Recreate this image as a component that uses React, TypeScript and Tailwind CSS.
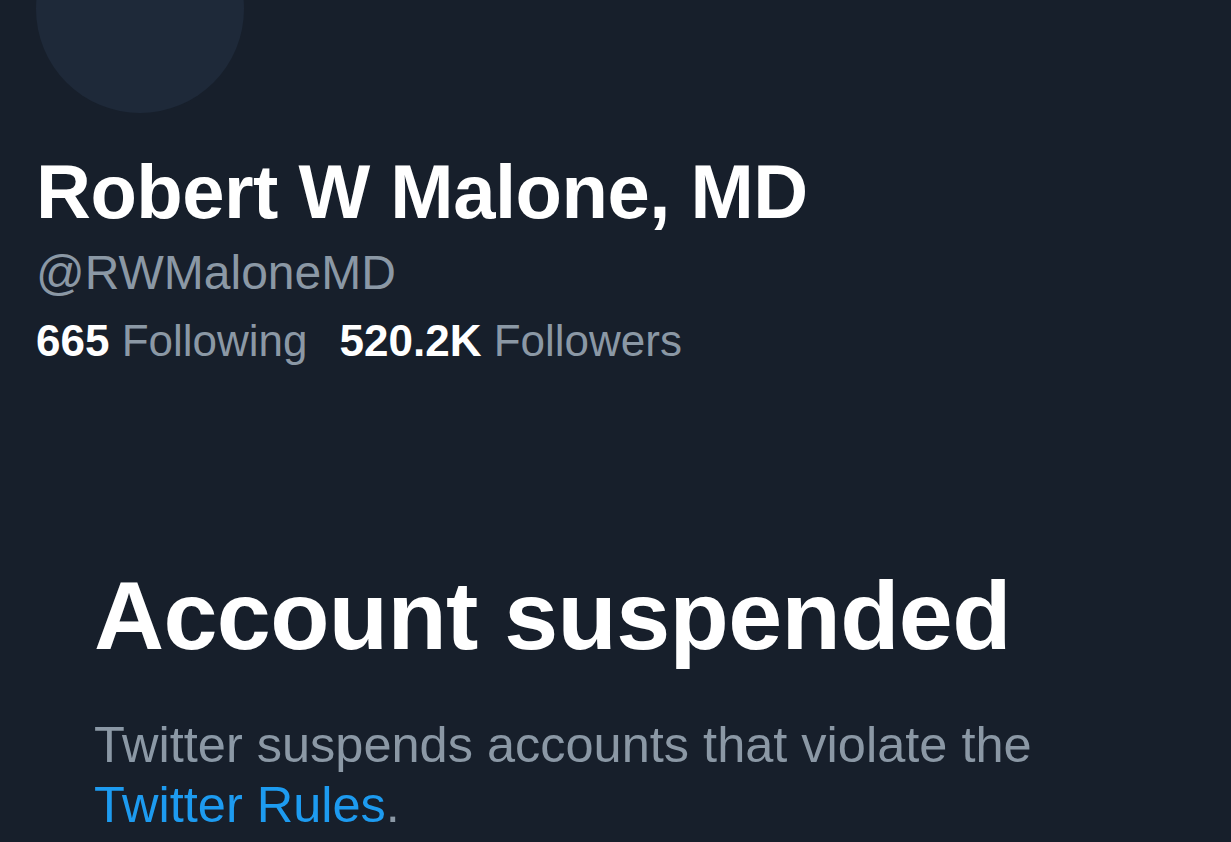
export default function App() {
  return (
    <div
      className="h-[842px] w-[1231px] overflow-hidden bg-[#171f2b] text-white"
      style={{ fontFamily: '"Liberation Sans", Arial, sans-serif' }}
    >
      <div className="pl-[36px]">
        <div className="mt-[-95px] h-[208px] w-[208px] rounded-full bg-[#1e2939]" />

        <h1 className="mt-[37px] text-[76px] font-bold leading-[84px] tracking-[-0.5px]">
          Robert W Malone, MD
        </h1>
        <div className="mt-[9px] text-[48px] leading-[60px] text-[#8b98a5]">@RWMaloneMD</div>
        <div className="mt-[12px] flex gap-[32px] text-[44px] leading-[52px]">
          <span>
            <span className="font-bold">665</span>{' '}
            <span className="text-[#8b98a5]">Following</span>
          </span>
          <span>
            <span className="font-bold">520.2K</span>{' '}
            <span className="text-[#8b98a5]">Followers</span>
          </span>
        </div>
      </div>

      <div className="mt-[199px] pl-[94px]">
        <h2 className="text-[97px] font-bold leading-[100px] tracking-[-0.6px]">Account suspended</h2>
        <p className="mt-[49px] text-[50.5px] leading-[60px] text-[#8b98a5]">
          Twitter suspends accounts that violate the
          <br />
          <a className="text-[#1d9bf0]">Twitter Rules</a>.
        </p>
      </div>
    </div>
  );
}
